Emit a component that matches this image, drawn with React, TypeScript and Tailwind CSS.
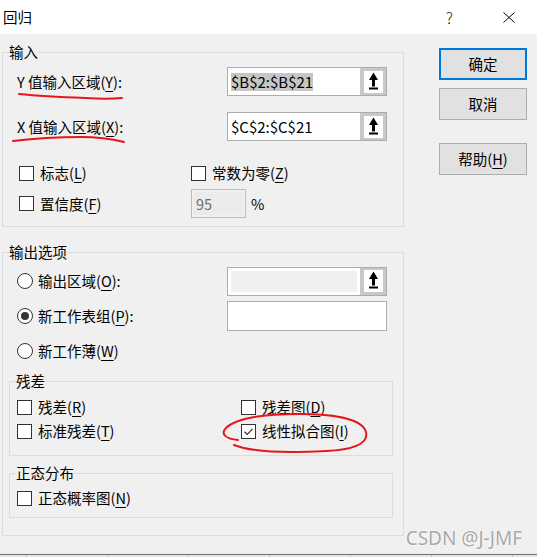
import type { ReactNode } from "react";

const FONT = "font-['Noto_Sans_CJK_SC','Noto_Sans',sans-serif]";

function Key({ children }: { children: ReactNode }) {
  return <span className="underline decoration-1 underline-offset-[3px]">{children}</span>;
}

function CheckBox({ checked = false }: { checked?: boolean }) {
  return (
    <span className="flex h-[15px] w-[15px] shrink-0 items-center justify-center border border-[#333333] bg-white">
      {checked && (
        <svg width="13" height="13" viewBox="0 0 13 13">
          <path d="M2.5 6.8 L5.2 9.4 L10.6 3.8" fill="none" stroke="#333333" strokeWidth="1.2" />
        </svg>
      )}
    </span>
  );
}

function Radio({ checked = false }: { checked?: boolean }) {
  return (
    <span className="flex h-[16px] w-[16px] shrink-0 items-center justify-center rounded-full border border-[#333333] bg-white">
      {checked && <span className="h-[8px] w-[8px] rounded-full bg-[#333333]" />}
    </span>
  );
}

function UploadButton() {
  return (
    <div className="flex w-[26px] shrink-0 items-center justify-center bg-[#c8c8c8]">
      <svg width="19" height="22" viewBox="0 0 19 22">
        <rect width="19" height="22" fill="#ffffff" />
        <polygon points="9.5,1.5 14,9 5,9" fill="#000000" />
        <rect x="8" y="8.5" width="3" height="7" fill="#000000" />
        <rect x="5" y="16.5" width="9" height="2" fill="#000000" />
      </svg>
    </div>
  );
}

function RefInput({ value, selected, disabled }: { value?: string; selected?: boolean; disabled?: boolean }) {
  return (
    <div className="flex h-[29px] w-[160px] border border-[#adadad] bg-white">
      <div className="flex flex-1 items-center p-[3px]">
        {disabled ? (
          <div className="h-full w-full bg-[#f0f0f0]" />
        ) : (
          <span className={`text-[15px] leading-[18px] text-black ${selected ? "bg-[#c6c6c6]" : ""}`}>{value}</span>
        )}
      </div>
      <UploadButton />
    </div>
  );
}

function Check({ label, checked }: { label: ReactNode; checked?: boolean }) {
  return (
    <div className="flex items-center gap-[6px]">
      <CheckBox checked={checked} />
      <span>{label}</span>
    </div>
  );
}

function Btn({ children, primary }: { children: ReactNode; primary?: boolean }) {
  return (
    <button
      type="button"
      className={`flex h-[32px] w-[88px] items-center justify-center bg-[#e1e1e1] text-[14.5px] text-black ${
        primary ? "border-2 border-[#0078d7]" : "border border-[#adadad]"
      }`}
    >
      {children}
    </button>
  );
}

export default function App() {
  return (
    <div className={`relative flex h-[557px] w-[537px] flex-col overflow-hidden bg-[#f0f0f0] text-[14.5px] leading-[20px] text-black ${FONT}`}>
      {/* title bar */}
      <div className="flex h-[34px] shrink-0 items-center bg-white pl-[3px] pr-[22px]">
        <span className="flex-1">回归</span>
        <span className="mr-[50px] text-[16px] font-light text-[#222]">?</span>
        <svg width="12" height="11" viewBox="0 0 12 11">
          <path d="M0.5 0.5 L11.5 10.5 M11.5 0.5 L0.5 10.5" stroke="#000" strokeWidth="1" />
        </svg>
      </div>

      <div className="flex flex-1">
        {/* left column */}
        <div className="ml-[2px] w-[402px]">
          <fieldset className="mt-[9px] w-[402px] border border-[#dcdcdc] pb-[8px]">
            <legend className="ml-[6px] leading-[18px]">输入</legend>
            <div className="mt-[6px] flex h-[29px] items-center">
              <div className="w-[224px] pl-[14px]">
                Y 值输入区域(<Key>Y</Key>):
              </div>
              <RefInput value="$B$2:$B$21" selected />
            </div>
            <div className="mt-[16px] flex h-[29px] items-center">
              <div className="w-[224px] pl-[14px]">
                X 值输入区域(<Key>X</Key>):
              </div>
              <RefInput value="$C$2:$C$21" />
            </div>
            <div className="mt-[22px] flex h-[20px] items-center">
              <div className="w-[188px] pl-[16px]">
                <Check label={<>标志(<Key>L</Key>)</>} />
              </div>
              <Check label={<>常数为零(<Key>Z</Key>)</>} />
            </div>
            <div className="mt-[6px] flex h-[29px] items-center">
              <div className="w-[188px] pl-[16px]">
                <Check label={<>置信度(<Key>F</Key>)</>} />
              </div>
              <div className="flex h-[29px] w-[55px] items-center border border-[#bcbcbc] bg-[#f0f0f0] p-[2px]">
                <div className="flex h-full w-full items-center bg-[#ebebeb] pl-[2px] text-[#6d6d6d]">95</div>
              </div>
              <span className="ml-[5px]">%</span>
            </div>
          </fieldset>

          <fieldset className="mt-[16px] w-[402px] border border-[#dcdcdc] pb-[17px]">
            <legend className="ml-[6px] leading-[18px]">输出选项</legend>
            <div className="mt-[5px] flex h-[30px] items-center">
              <div className="flex w-[224px] items-center gap-[5px] pl-[14px]">
                <Radio />
                <span>输出区域(<Key>O</Key>):</span>
              </div>
              <RefInput disabled />
            </div>
            <div className="mt-[5px] flex h-[30px] items-center">
              <div className="flex w-[224px] items-center gap-[5px] pl-[14px]">
                <Radio checked />
                <span>新工作表组(<Key>P</Key>):</span>
              </div>
              <div className="h-[30px] w-[160px] border border-[#adadad] bg-white" />
            </div>
            <div className="mt-[5px] flex h-[30px] items-center">
              <div className="flex items-center gap-[5px] pl-[14px]">
                <Radio />
                <span>新工作薄(<Key>W</Key>)</span>
              </div>
            </div>

            <fieldset className="ml-[6px] mt-[6px] w-[384px] border border-[#dcdcdc] pb-[14px]">
              <legend className="ml-[6px] leading-[18px]">残差</legend>
              <div className="mt-[7px] flex h-[20px] items-center">
                <div className="w-[231px] pl-[7px]">
                  <Check label={<>残差(<Key>R</Key>)</>} />
                </div>
                <Check label={<>残差图(<Key>D</Key>)</>} />
              </div>
              <div className="mt-[4px] flex h-[20px] items-center">
                <div className="w-[231px] pl-[7px]">
                  <Check label={<>标准残差(<Key>T</Key>)</>} />
                </div>
                <Check checked label={<>线性拟合图(<Key>I</Key>)</>} />
              </div>
            </fieldset>

            <fieldset className="ml-[6px] mt-[8px] w-[384px] border border-[#dcdcdc] pb-[9px]">
              <legend className="ml-[6px] leading-[18px]">正态分布</legend>
              <div className="mt-[6px] flex h-[20px] items-center pl-[7px]">
                <Check label={<>正态概率图(<Key>N</Key>)</>} />
              </div>
            </fieldset>
          </fieldset>
        </div>

        {/* buttons */}
        <div className="ml-[35px] mt-[14px] flex flex-col">
          <Btn primary>确定</Btn>
          <div className="mt-[8px]">
            <Btn>取消</Btn>
          </div>
          <div className="mt-[23px]">
            <Btn>
              帮助(<Key>H</Key>)
            </Btn>
          </div>
        </div>
      </div>

      {/* sheet header strip behind the dialog */}
      <div className="flex h-[3px] shrink-0 border-t border-[#6e6e6e] bg-[#e6e6e6]">
        <div className="w-[27px] border-r border-[#c6c6c6]" />
        <div className="w-[81px] border-r border-[#c6c6c6]" />
        <div className="w-[81px] border-r border-[#c6c6c6]" />
        <div className="w-[81px] border-r border-[#c6c6c6]" />
        <div className="w-[81px] border-r border-[#c6c6c6]" />
        <div className="w-[81px] border-r border-[#c6c6c6]" />
        <div className="w-[81px] border-r border-[#c6c6c6]" />
      </div>

      {/* red pen annotations */}
      <svg className="pointer-events-none absolute inset-0" width="537" height="557" viewBox="0 0 537 557">
        <g fill="none" stroke="#e8161b" strokeWidth="2" strokeLinecap="round">
          <path d="M19 94 C40 96 60 97 85 98 C100 99 112 99 122 98" />
          <path d="M13 141 C30 139 55 137 80 137 C98 137 112 139 124 142" />
          <path d="M238 440 C226 439 220 434 226 428 C236 418 262 414 300 414 C334 414 362 419 366 432 C369 444 352 450 326 451 C290 453 252 452 234 445" />
        </g>
      </svg>

      {/* watermark */}
      <span className="absolute bottom-[8px] right-[15px] text-[19px] leading-[22px] text-[#a8a8a8] [text-shadow:0_0_2px_#ffffff,0_0_1px_#ffffff] font-['Noto_Sans','Noto_Sans_CJK_SC',sans-serif]">
        CSDN @J-JMF
      </span>
    </div>
  );
}
